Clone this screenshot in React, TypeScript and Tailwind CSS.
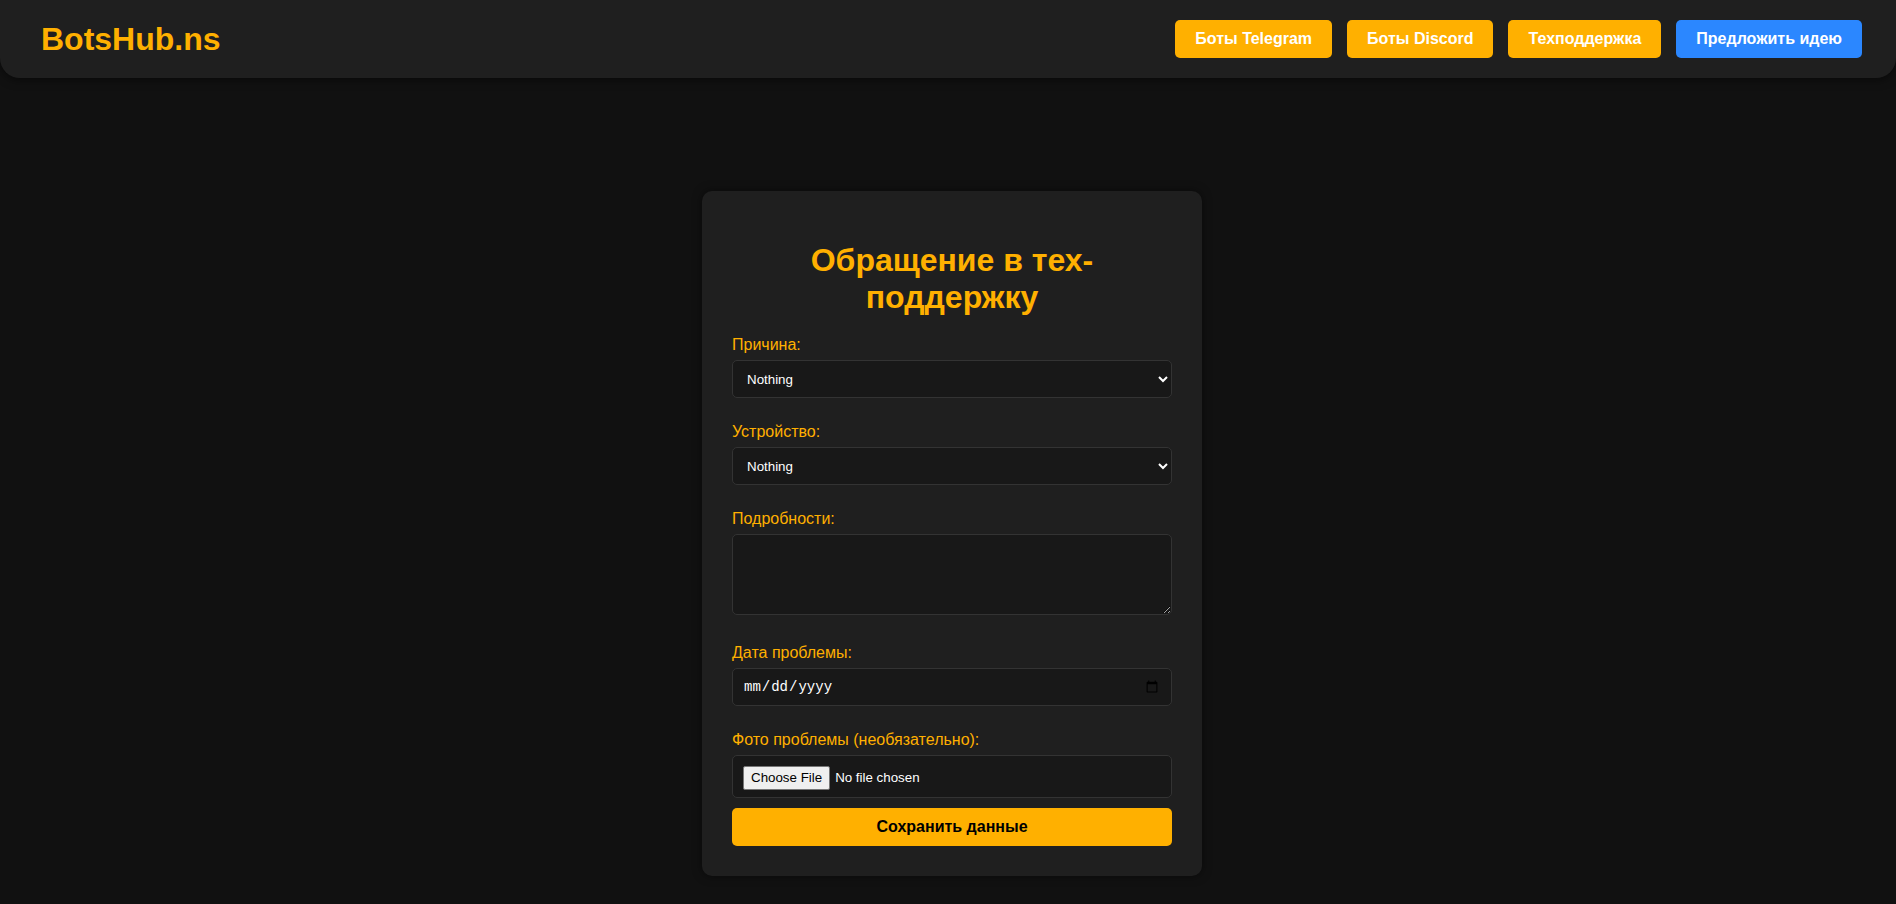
import React from "react";

const navLinks = [
  { label: "Боты Telegram", accent: false },
  { label: "Боты Discord", accent: false },
  { label: "Техподдержка", accent: false },
  { label: "Предложить идею", accent: true },
];

const Label = ({ children }: { children: React.ReactNode }) => (
  <label className="block text-[16px] leading-[18px] text-[#ffb000] mb-[6px]">
    {children}
  </label>
);

const fieldClass =
  "block w-full bg-[#181818] border border-[#333] rounded-[5px] text-white text-[13.33px] outline-none";

export default function App() {
  return (
    <div className="min-h-screen bg-[#111111] font-['Liberation_Sans',Arial,sans-serif]">
      {/* Top bar */}
      <header className="flex items-center justify-between bg-[#1f1f1f] rounded-b-[20px] shadow-[0_2px_10px_rgba(0,0,0,0.5)] pl-[41px] pr-[34px] py-[20px]">
        <h1 className="text-[32px] leading-[37px] font-bold text-[#ffb000]">
          BotsHub.ns
        </h1>
        <nav className="flex items-center gap-[15px]">
          {navLinks.map((link) => (
            <a
              key={link.label}
              href="#"
              className={`px-[20px] py-[10px] rounded-[5px] text-white font-bold text-[16px] leading-[18px] ${
                link.accent ? "bg-[#2b87ff]" : "bg-[#ffb000]"
              }`}
            >
              {link.label}
            </a>
          ))}
        </nav>
      </header>

      {/* Support form */}
      <div className="flex justify-center pt-[113px] pb-[29px] pl-[8px]">
        <form className="w-[500px] bg-[#1f1f1f] rounded-[10px] p-[30px] shadow-[0_0_10px_rgba(0,0,0,0.5)]">
          <h2 className="text-[32px] leading-[37px] font-bold text-[#ffb000] text-center mt-[21px] mb-[20px]">
            Обращение в тех-поддержку
          </h2>

          <div className="mb-[25px]">
            <Label>Причина:</Label>
            <select className={`${fieldClass} h-[38px] px-[10px]`}>
              <option>Nothing</option>
            </select>
          </div>

          <div className="mb-[25px]">
            <Label>Устройство:</Label>
            <select className={`${fieldClass} h-[38px] px-[10px]`}>
              <option>Nothing</option>
            </select>
          </div>

          <div className="mb-[29px]">
            <Label>Подробности:</Label>
            <textarea className={`${fieldClass} h-[81px] p-[10px]`} />
          </div>

          <div className="mb-[25px]">
            <Label>Дата проблемы:</Label>
            <input
              type="date"
              className={`${fieldClass} h-[38px] px-[10px] font-['Liberation_Mono',monospace] text-[14px]`}
            />
          </div>

          <div className="mb-[10px]">
            <Label>Фото проблемы (необязательно):</Label>
            <input
              type="file"
              className={`${fieldClass} h-[43px] p-[10px] file:bg-[#efefef] file:text-black file:border file:border-[#767676] file:rounded-[2px] file:px-[7px] file:py-[1px] file:mr-[5px] file:text-[13.33px]`}
            />
          </div>

          <button
            type="button"
            className="block w-full h-[38px] bg-[#ffb000] rounded-[5px] text-black font-bold text-[16px]"
          >
            Сохранить данные
          </button>
        </form>
      </div>
    </div>
  );
}
